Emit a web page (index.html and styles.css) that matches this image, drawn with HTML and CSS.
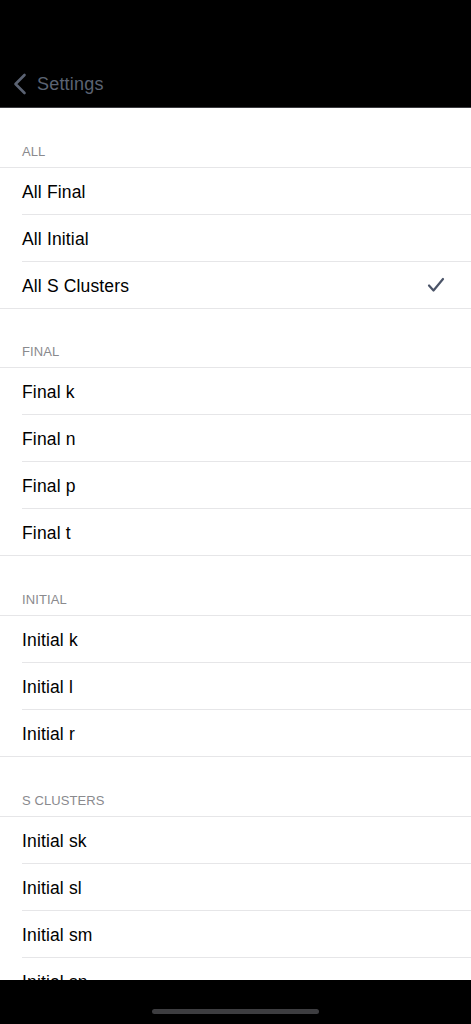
FILE: index.html
```html
<!DOCTYPE html>
<html lang="en">
<head>
<meta charset="utf-8">
<title>Settings</title>
<link rel="stylesheet" href="styles.css">
</head>
<body>
<div class="screen">
  <header class="nav">
    <a class="back" href="#">
      <svg class="chevron" width="14" height="22" viewBox="0 0 14 22" aria-hidden="true">
        <path d="M11.5 2 L2.5 11 L11.5 20" fill="none" stroke="currentColor" stroke-width="2.6" stroke-linecap="round" stroke-linejoin="round"/>
      </svg>
      <span>Settings</span>
    </a>
  </header>

  <main class="content">
    <section class="group">
      <h2 class="group-title">All</h2>
      <ul class="list">
        <li class="row">All Final</li>
        <li class="row">All Initial</li>
        <li class="row">All S Clusters
          <svg class="check" width="18" height="16" viewBox="0 0 18 16" aria-hidden="true">
            <path d="M2 8.5 L6.5 13.5 L16 2" fill="none" stroke="currentColor" stroke-width="2.2" stroke-linecap="round" stroke-linejoin="round"/>
          </svg>
        </li>
      </ul>
    </section>

    <section class="group">
      <h2 class="group-title">Final</h2>
      <ul class="list">
        <li class="row">Final k</li>
        <li class="row">Final n</li>
        <li class="row">Final p</li>
        <li class="row">Final t</li>
      </ul>
    </section>

    <section class="group">
      <h2 class="group-title">Initial</h2>
      <ul class="list">
        <li class="row">Initial k</li>
        <li class="row">Initial l</li>
        <li class="row">Initial r</li>
      </ul>
    </section>

    <section class="group">
      <h2 class="group-title">S Clusters</h2>
      <ul class="list">
        <li class="row">Initial sk</li>
        <li class="row">Initial sl</li>
        <li class="row">Initial sm</li>
        <li class="row">Initial sn</li>
        <li class="row">Initial sp</li>
        <li class="row">Initial st</li>
      </ul>
    </section>
  </main>

  <div class="home-bar"><span class="home-indicator"></span></div>
</div>
</body>
</html>
```

FILE: styles.css
```css
* {
  box-sizing: border-box;
}

html, body {
  margin: 0;
  padding: 0;
  height: 1024px;
  overflow: hidden;
  background: #ffffff;
  font-family: "Liberation Sans", Arial, sans-serif;
}

.screen {
  width: 471px;
  height: 1024px;
  position: relative;
  overflow: hidden;
  background: #ffffff;
}

.nav {
  height: 108px;
  background: #000000;
  border-bottom: 1px solid #3c3c40;
  display: flex;
  align-items: flex-end;
  padding: 0 0 12px 13px;
}

.back {
  display: flex;
  align-items: center;
  gap: 10px;
  color: #5b6373;
  text-decoration: none;
  font-size: 18px;
  letter-spacing: 0.2px;
  line-height: 22px;
}

.chevron {
  display: block;
}

.content {
  display: flex;
  flex-direction: column;
}

.group-title {
  margin: 0;
  height: 58.67px;
  display: flex;
  align-items: flex-end;
  padding: 0 22px 7px;
  font-size: 13px;
  font-weight: normal;
  line-height: 16px;
  text-transform: uppercase;
  color: #8a8a8e;
  letter-spacing: 0.1px;
}

.list {
  list-style: none;
  margin: 0;
  padding: 0;
  border-top: 1px solid #e6e6e8;
  border-bottom: 1px solid #e6e6e8;
}

.row {
  position: relative;
  height: 46px;
  margin-top: 1px;
  display: flex;
  align-items: center;
  justify-content: space-between;
  padding: 3px 26px 0 22px;
  font-size: 17.5px;
  letter-spacing: 0.15px;
  color: #000000;
}

.row:first-child {
  margin-top: 0;
}

.row:not(:first-child)::before {
  content: "";
  position: absolute;
  top: -1px;
  left: 22px;
  right: 0;
  height: 1px;
  background: #e6e6e8;
}

.check {
  display: block;
  color: #4b5468;
  margin-top: -3px;
}

.home-bar {
  position: absolute;
  left: 0;
  right: 0;
  bottom: 0;
  height: 44px;
  background: #000000;
  display: flex;
  justify-content: center;
  padding-top: 29px;
}

.home-indicator {
  display: block;
  width: 167px;
  height: 5px;
  border-radius: 3px;
  background: #3d3d40;
}
```
